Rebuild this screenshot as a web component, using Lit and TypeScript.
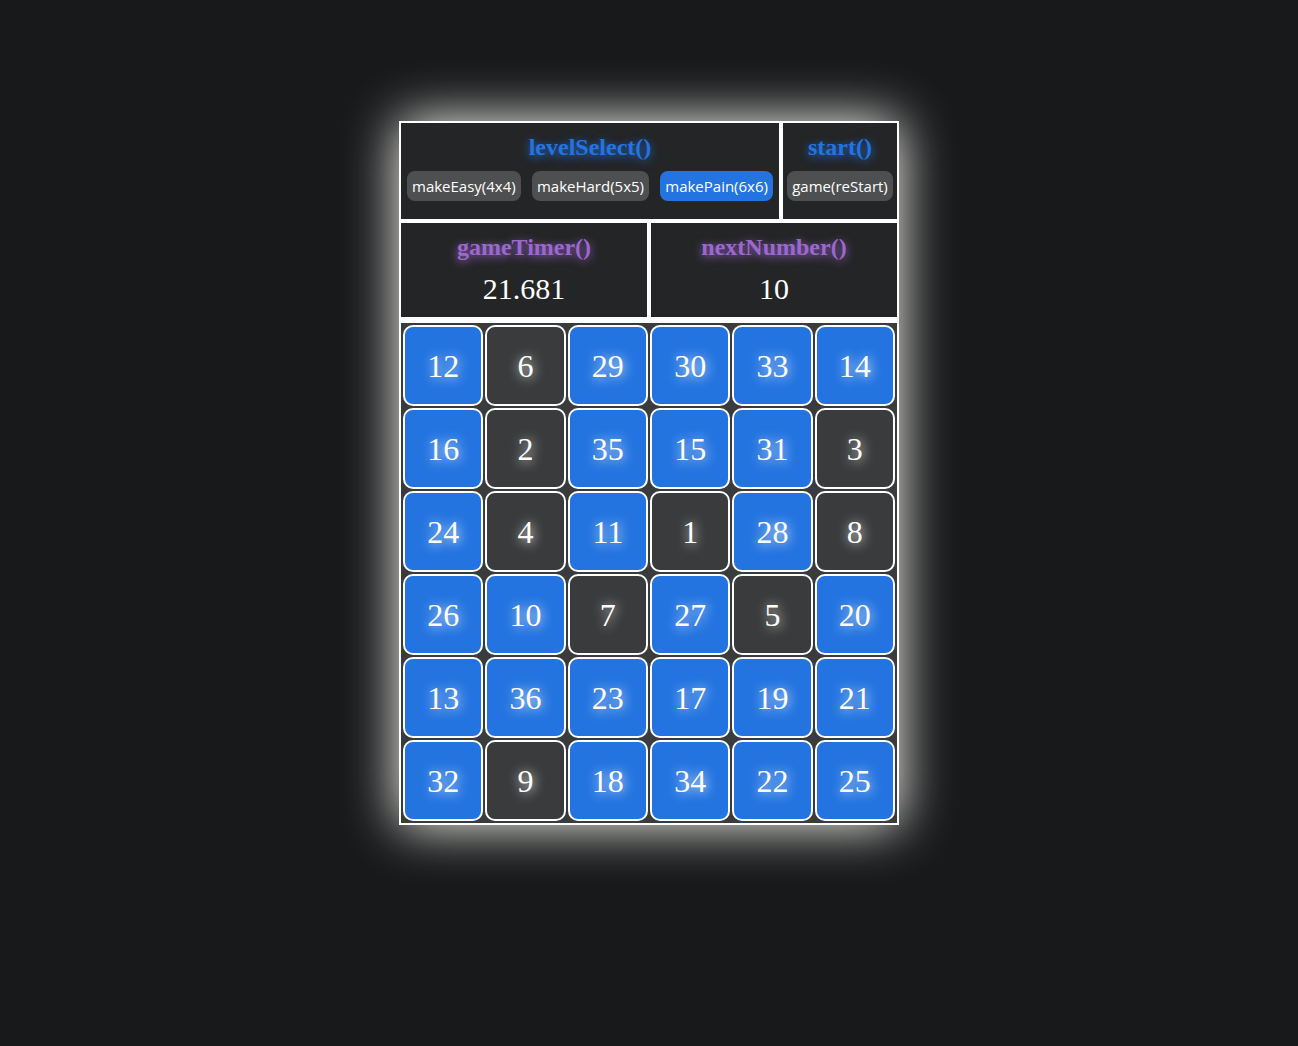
import { LitElement, html, css } from "lit";
import { customElement, property, state } from "lit/decorators.js";
import { classMap } from "lit/directives/class-map.js";

const LEVELS = [
  { size: 4, label: "makeEasy(4x4)" },
  { size: 5, label: "makeHard(5x5)" },
  { size: 6, label: "makePain(6x6)" },
];

const NUMBERS = [
  12, 6, 29, 30, 33, 14,
  16, 2, 35, 15, 31, 3,
  24, 4, 11, 1, 28, 8,
  26, 10, 7, 27, 5, 20,
  13, 36, 23, 17, 19, 21,
  32, 9, 18, 34, 22, 25,
];

@customElement("game-panel")
export class GamePanel extends LitElement {
  @property() heading = "";
  @property({ reflect: true }) tone = "blue";

  static styles = css`
    :host {
      display: block;
      box-sizing: border-box;
      min-width: 0;
      border: 2px solid #fff;
      background: #242526;
      color: #fff;
      padding: 10px 6px;
      text-align: center;
    }
    .heading {
      margin: 0;
      font-size: 24px;
      line-height: 28px;
      font-weight: bold;
      color: #2374e1;
      text-shadow: 0 2px 10px #2374e1;
    }
    :host([tone="purple"]) .heading {
      color: #9b68ce;
      text-shadow: 0 2px 10px #9b68ce;
    }
  `;

  render() {
    return html`<h2 class="heading">${this.heading}</h2><slot></slot>`;
  }
}

@customElement("app-root")
export class AppRoot extends LitElement {
  @state() private size = 6;
  @state() private next = 10;
  @state() private time = 21.681;
  @state() private numbers = NUMBERS;

  static styles = css`
    :host {
      display: block;
      box-sizing: border-box;
      min-height: 100vh;
      padding: 121px 16px;
      background: #18191a;
      font-family: "Liberation Serif", "Times New Roman", serif;
    }
    .game {
      max-width: 500px;
      margin: 0 auto;
      box-shadow: 0 0 50px #fffffa;
    }
    .controls {
      display: grid;
      grid-template-columns: 382fr 118fr;
    }
    .status {
      display: grid;
      grid-template-columns: 1fr 1fr;
    }
    .controls game-panel {
      padding-bottom: 18px;
    }
    .buttons {
      display: flex;
      justify-content: space-between;
      padding-top: 10px;
    }
    .buttons.single {
      justify-content: center;
    }
    .action {
      border: 0;
      border-radius: 8px;
      padding: 5px;
      background: #4e4f50;
      color: #fff;
      font: 15px/20px Tahoma, "Open Sans", sans-serif;
      white-space: nowrap;
      cursor: pointer;
    }
    .action.active {
      background: #2374e1;
    }
    .value {
      display: block;
      padding-top: 10px;
      font-size: 30px;
      line-height: 36px;
    }
    .board {
      display: grid;
      gap: 2px;
      padding: 2px;
      border: 2px solid #fff;
      border-top-width: 4px;
      background: #3a3b3c;
    }
    .cell {
      min-width: 0;
      padding: 1px 0 0;
      border: 2px solid #fff;
      border-radius: 10px;
      background: #2374e1;
      color: #fff;
      font: 32px/76px "Liberation Serif", "Times New Roman", serif;
      text-shadow: 1px 1px 12px #fff;
      cursor: pointer;
    }
    .cell.done {
      background: #3a3b3c;
    }
  `;

  private restart(size = this.size) {
    this.size = size;
    this.next = 1;
    this.time = 0;
    this.numbers = Array.from({ length: size * size }, (_, i) => i + 1)
      .map((n) => ({ n, order: Math.random() }))
      .sort((a, b) => a.order - b.order)
      .map(({ n }) => n);
  }

  private pick(n: number) {
    if (n === this.next) this.next++;
  }

  render() {
    return html`
      <main class="game">
        <div class="controls">
          <game-panel heading="levelSelect()">
            <div class="buttons">
              ${LEVELS.map(
                ({ size, label }) => html`<button
                  type="button"
                  class=${classMap({ action: true, active: size === this.size })}
                  @click=${() => this.restart(size)}
                >${label}</button>`
              )}
            </div>
          </game-panel>
          <game-panel heading="start()">
            <div class="buttons single">
              <button type="button" class="action" @click=${() => this.restart()}>game(reStart)</button>
            </div>
          </game-panel>
        </div>
        <div class="status">
          <game-panel heading="gameTimer()" tone="purple">
            <span class="value">${this.time.toFixed(3)}</span>
          </game-panel>
          <game-panel heading="nextNumber()" tone="purple">
            <span class="value">${this.next}</span>
          </game-panel>
        </div>
        <div class="board" style="grid-template-columns: repeat(${this.size}, 1fr)">
          ${this.numbers.map(
            (n) => html`<button
              type="button"
              class=${classMap({ cell: true, done: n < this.next })}
              @click=${() => this.pick(n)}
            >${n}</button>`
          )}
        </div>
      </main>
    `;
  }
}
